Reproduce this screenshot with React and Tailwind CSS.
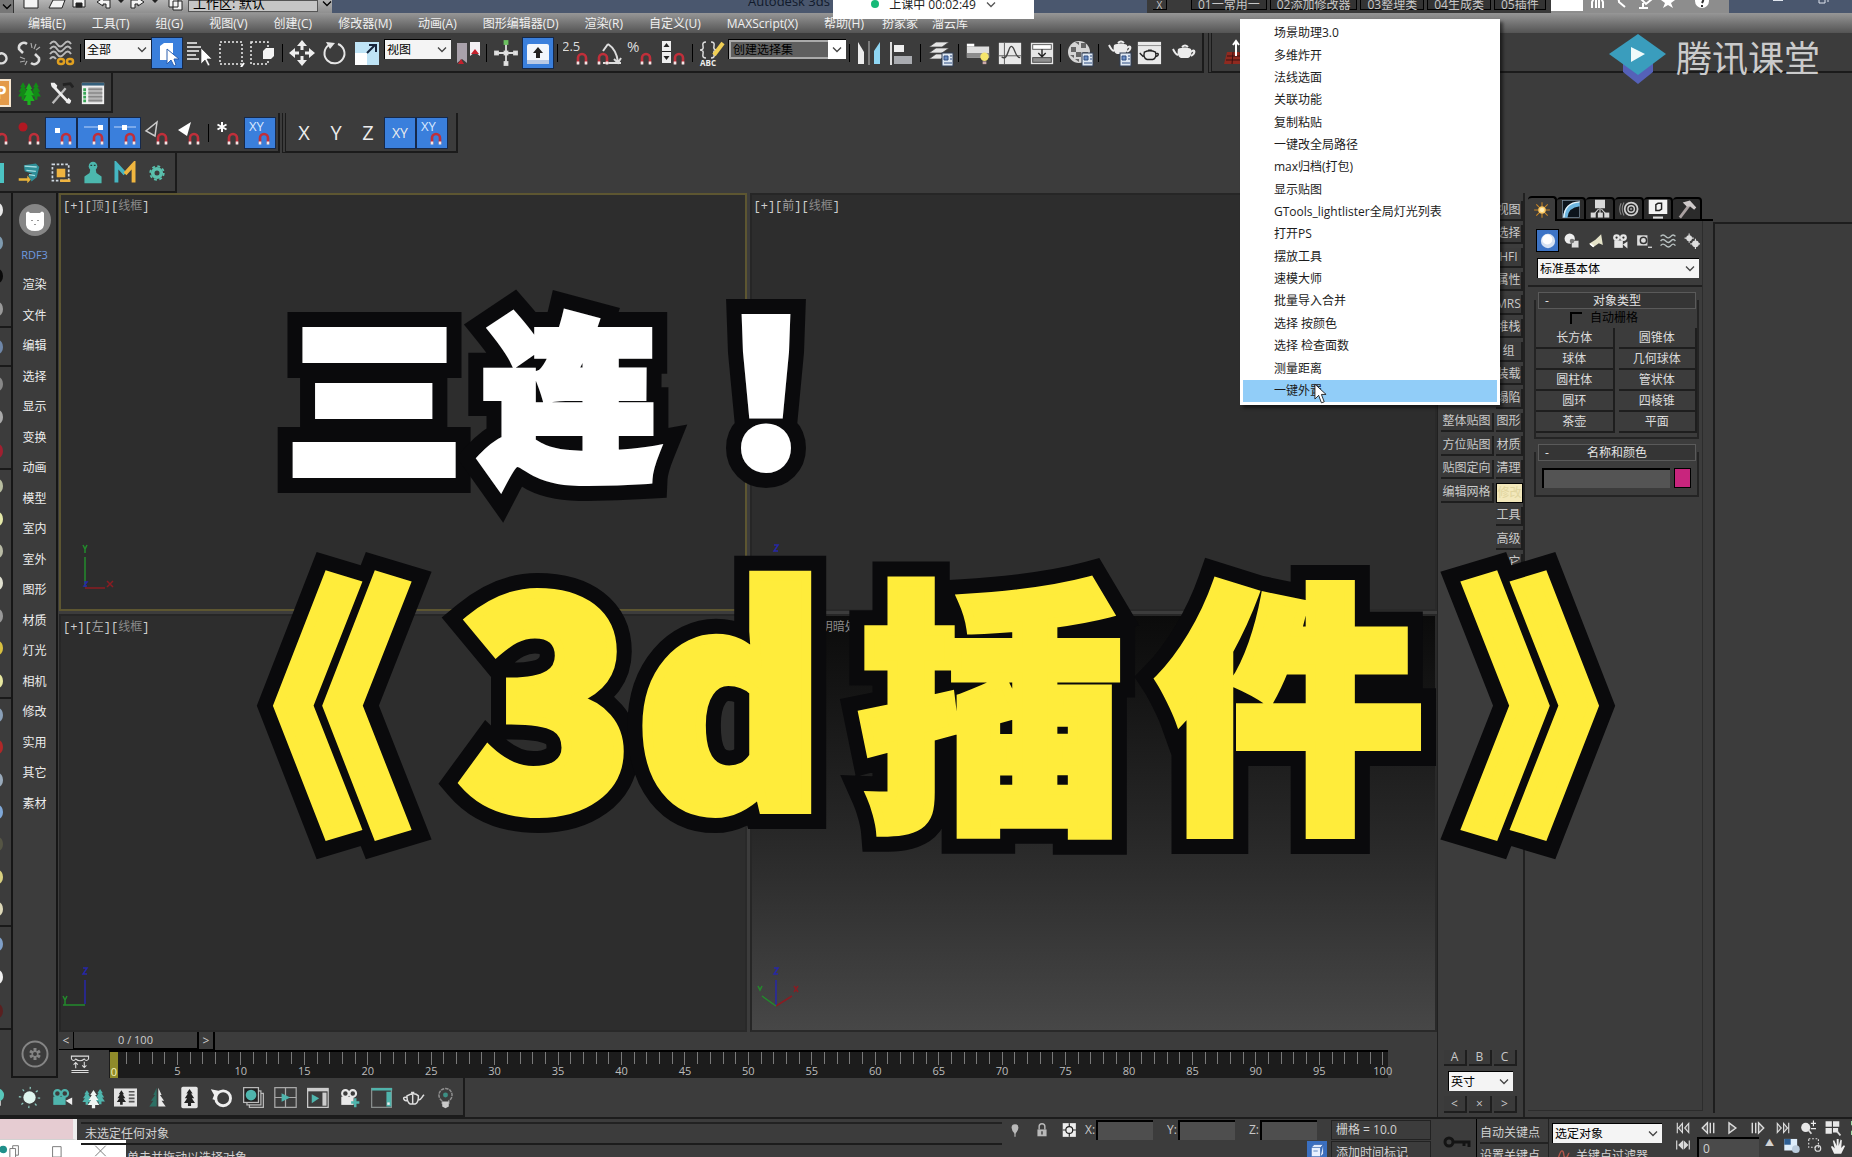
import React from "react";

const M = ({ x = 0 }) => (
  <g transform={`translate(${x} 0)`} fill="none">
    <path d="M15 25v-6a4 4 0 0 1 8 0v6" stroke="#c02f3a" strokeWidth="2.6" />
    <path d="M15 22.500v3M23 22.500v3" stroke="#f2e6e6" strokeWidth="2.6" />
  </g>
);
const page = <g><rect x="16" y="14" width="11" height="13" fill="#dfe8f2" stroke="#2f3d55" /><path d="M18 17h4v4h-4zM24 17h2M24 20h2M18 24h8" stroke="#2f4d80" fill="#6c8fc4" /></g>;
const teapot = <g><path d="M8 14c-1 4 0 8 3 9h7c3-1 4-5 3-9-4-2-9-2-13 0z" fill="#ececec" /><path d="M8 20c-3-1-4-4-5-6M21 17c4-4 5 1 0 4M12 12q3-3 6 0" fill="none" stroke="#ececec" strokeWidth="2" /></g>;
const tree = "M0-11l4 6h-2l4 6h-3l4 6h-5v4h-4v-4h-5l4-6h-3l4-6h-2z";
const film = (c) => <g><circle cx="9" cy="9" r="4" fill="none" stroke={c} strokeWidth="2.500" /><circle cx="18" cy="9" r="4" fill="none" stroke={c} strokeWidth="2.500" /><rect x="4" y="13" width="15" height="10" fill={c} /></g>;

const ICONS = {
  link: <path d="M8 19a5 5 0 1 1 4-8l4 4a5 5 0 1 1-1 8l-5-5" fill="none" stroke="#ddd" strokeWidth="2.500" />,
  unlink: <g fill="none" stroke="#ddd" strokeWidth="2.500"><path d="M12 5a5 5 0 0 0-8 5l4 4M16 24a5 5 0 0 0 8-5l-4-4" /><path d="M16 4l1 5M21 5l-2 5M25 8l-4 3M5 18l5 2M5 23l5-1M10 26l2-4" strokeWidth="1.200" stroke="#aaa" /></g>,
  bind: <g fill="none"><path d="M3 5q4-5 7 0t7 0 7 0M3 10q4-5 7 0t7 0 7 0M3 15q4-5 7 0t7 0 7 0M3 20q3-4 6 0" stroke="#b9b9b9" strokeWidth="2" /><rect x="11" y="20" width="6" height="5" rx="2.500" stroke="#e0a020" strokeWidth="2.500" /><rect x="20" y="20" width="6" height="5" rx="2.500" stroke="#e0a020" strokeWidth="2.500" /></g>,
  obj: <g><path d="M7 7l4-3h9v13l-4 4H7z" fill="#fff" /><path d="M14 10v15l4-4 3 6 2-1-2-6h5z" fill="#fff" stroke="#2b5fb0" /></g>,
  byname: <g><path d="M2 4h10M2 8h14M2 12h12M2 16h9M2 20h12" stroke="#c8c8c8" strokeWidth="2" /><path d="M16 9v16l4-4 3 6 2-1-3-6h5z" fill="#fff" stroke="#333" strokeWidth=".6" /></g>,
  rect: <g><rect x="3" y="3" width="22" height="22" fill="none" stroke="#eee" strokeWidth="1.500" strokeDasharray="2 2" /><path d="M27 24l-3 4" stroke="#fff" strokeWidth="2" /></g>,
  window: <g><rect x="2" y="3" width="17" height="22" fill="none" stroke="#eee" strokeWidth="1.500" strokeDasharray="2 2" /><path d="M14 12l3-3h8v8l-3 3h-8z" fill="#f4f4f4" /></g>,
  move: <g fill="#eee"><path d="M14 1l5 6H9zM14 27l5-6H9zM1 14l6-5v10zM27 14l-6-5v10z" /><path d="M14 7v4M14 17v4M7 14h4M17 14h4" stroke="#eee" strokeWidth="3" /></g>,
  rotate: <g><path d="M9 6a10 10 0 1 0 9-1" fill="none" stroke="#e6e6e6" strokeWidth="2" /><path d="M6 3l9 1-5 6z" fill="#e6e6e6" /></g>,
  scale: <g><rect x="2" y="3" width="24" height="23" fill="#bfe4f6" /><rect x="2" y="14" width="12" height="12" fill="#fff" /><path d="M14 14l8-8M16 6h7v7" stroke="#16253c" strokeWidth="2" fill="none" /></g>,
  pivot: <g><path d="M4 4h10v20l-5-4-5 4z" fill="#a9a1ab" /><path d="M17 3h10v14l-5-4-5 4z" fill="#f3eff3" /><path d="M8 20l3 5h-6zM22 10l4 5h-8z" fill="#c4202c" /></g>,
  manip: <g stroke="#ddd" strokeWidth="1.800" fill="#eee"><path d="M14 4v20M4 14h20" /><rect x="12.500" y="12.500" width="3" height="3" /><rect x="3" y="12.500" width="3" height="3" /><rect x="22" y="12.500" width="3" height="3" /><rect x="12.500" y="23" width="3" height="3" /><rect x="12.500" y="2" width="3" height="3" fill="#6cc060" stroke="#6cc060" /></g>,
  key: <g><rect x="3" y="5" width="22" height="18" rx="2" fill="#f2f6fc" /><path d="M3 21h22v4H3z" fill="#b9c9e4" /><path d="M14 8l5 6h-3v5h-4v-5H9z" fill="#222" /></g>,
  snap25: <g><text x="-1" y="12" fontSize="13" fill="#ddd">2.5</text><M /></g>,
  angle: <g><path d="M8 24h18M13 5L8 12M13 5c6 4 9 10 10 18M19 20l4 4 3-5" fill="none" stroke="#ddd" strokeWidth="2" /><M x={-11} /></g>,
  percent: <g><text x="0" y="13" fontSize="15" fill="#ddd">%</text><M /></g>,
  spin: <g><rect x="3" y="2" width="9" height="22" fill="#eee" /><path d="M7.500 4l3 4h-6zM7.500 21l3-4h-6z" fill="#222" /><path d="M3 12.500h9" stroke="#222" /><M x={1} /></g>,
  braces: <g><path d="M8 3q-4 0-3 4t-3 4q4 0 3 4t3 4M13 3q4 0 3 4t3 4q-4 0-3 4t-3 4" fill="none" stroke="#ddd" strokeWidth="1.500" /><path d="M25 4l-9 12" stroke="#f0cf55" strokeWidth="4" /><text x="2" y="27" fontSize="8" fontWeight="700" fill="#eee">ABC</text></g>,
  mirror: <g><path d="M3 3v22h6V13z" fill="#ececec" /><path d="M14 2v24" stroke="#bbb" /><path d="M25 3v22h-6V12z" fill="#8fd6f3" /></g>,
  align: <g><path d="M4 3v23" stroke="#ddd" strokeWidth="2" /><rect x="7" y="6" width="10" height="7" fill="#eee" /><rect x="7" y="17" width="18" height="8" fill="#a9abb0" /></g>,
  layers: <g><path d="M10 3h13l-7 5H3zM10 9h13l-7 5H3zM10 15h10l-5 5H3z" fill="#e6e6e6" stroke="#444" strokeWidth=".7" />{page}</g>,
  ribbon: <g><path d="M2 7h24v12H2z" fill="#dedede" /><path d="M2 4h8v3H2z" fill="#fff" /><path d="M2 14h24v5H2z" fill="#8c8c8c" /><circle cx="21" cy="18" r="4.500" fill="#f5e66c" /><path d="M19 23h4v3h-4z" fill="#caa" /></g>,
  curve: <g><rect x="2" y="3" width="24" height="23" fill="#e8e8e8" /><path d="M8 3v23M2 17h24" stroke="#555" /><path d="M5 18c7 6 7-13 11-11s3 12 9 12" fill="none" stroke="#444" strokeWidth="1.500" /></g>,
  schematic: <g><rect x="2" y="3" width="24" height="23" fill="#e6e6e6" /><rect x="4" y="5" width="20" height="5" fill="#fff" stroke="#555" /><rect x="4" y="19" width="20" height="5" fill="#8f8f8f" stroke="#444" /><path d="M14 10v7M10 14l4 4 4-4" stroke="#222" strokeWidth="1.500" fill="none" /></g>,
  material: <g><circle cx="13" cy="13" r="11" fill="#d5d5d5" /><path d="M5 8h5v5H5zM15 4h5v5h-5zM10 13h5v5h-5zM4 16h4v3M16 13h6v4M9 3h4v3M9 20h4v3" fill="#666" />{page}</g>,
  rsetup: <g><g transform="translate(2 -8)">{teapot}</g>{page}</g>,
  rframe: <g><rect x="2" y="2" width="25" height="24" fill="#e9e9e9" /><path d="M2 6h25" stroke="#888" /><path d="M9 13c-1 4 0 7 3 8h6c3-1 4-4 3-8-4-2-8-2-12 0zM8 18l-4-4M21 15c4-2 4 2 0 3M13 11h4" fill="none" stroke="#222" strokeWidth="1.500" /></g>,
  render: <g transform="translate(1 -4)">{teapot}</g>,
  redgrid: <g><path d="M5 14h20l3 12H2z" fill="#8f2a20" /><path d="M5 18h21M4 22h23M11 14l-1 12M18 14l1 12" stroke="#3a1010" /><path d="M14 18V4M11 7l3-4 3 4" stroke="#fff" strokeWidth="2" fill="none" /></g>,
  orange: <g><rect x="1" y="1" width="26" height="26" fill="#e39a49" stroke="#f6e6d0" strokeWidth="2" /><text x="13" y="20" fontSize="17" fontWeight="700" fill="#fff">P</text></g>,
  trees: <g fill="#128a16"><path d={tree} transform="translate(8 12) scale(.7 .8)" /><path d={tree} transform="translate(21 12) scale(.7 .8)" /><path d={tree} transform="translate(14 15) scale(.8 1)" fill="#1cb41f" /></g>,
  wrench: <g><path d="M5 25L19 9" stroke="#bbb" strokeWidth="2.500" /><path d="M6 7l15 16" stroke="#eee" strokeWidth="3" /><path d="M3 3q0 7 6 6l1-3-3-3zM19 24q5 4 6-2l-3-3z" fill="#eee" /><path d="M16 5l8-1 3 4" stroke="#222" strokeWidth="3" fill="none" /></g>,
  list: <g><rect x="2" y="3" width="24" height="23" fill="#f1f1f1" /><path d="M2 3h24v3H2z" fill="#35607c" /><path d="M5 9v15" stroke="#3aa657" strokeWidth="3" strokeDasharray="3 1" /><path d="M9 8h15v16H9z" fill="#b5b5b5" /><path d="M9 10h15M9 14h15M9 18h15M9 22h15" stroke="#888" strokeWidth="1.500" /></g>,
  magnet: <M />,
  redmag: <g><circle cx="8" cy="8" r="4.500" fill="#b01822" /><M /></g>,
  dotmag: <g><rect x="8" y="9" width="5" height="5" fill="#fff" /><M /></g>,
  edgemag: <g><path d="M5 8h18" stroke="#bcd6fa" /><rect x="19" y="6" width="5" height="5" fill="#fff" /><M /></g>,
  midmag: <g><path d="M3 8h22" stroke="#bcd6fa" /><rect x="11" y="6" width="5" height="5" fill="#fff" /><M /></g>,
  trimag: <g><path d="M14 3L3 12l9 5z" fill="none" stroke="#ccc" strokeWidth="1.500" /><M /></g>,
  trifmag: <g><path d="M16 3L3 11l9 6z" fill="#fff" /><M /></g>,
  starmag: <g><path d="M8 3v10M3.500 5.500l9 5M12.500 5.500l-9 5" stroke="#fff" strokeWidth="2" /><M /></g>,
  xymag: <g><text x="3" y="12" fontSize="13" fill="#dbe9ff">XY</text><M x={-1} /></g>,
  teal: <path d="M6 4h4v20H6zM12 4h9v20h-4V9h-5z" fill="#4cc3c3" />,
  books: <g><path d="M8 5l14-2 4 4-3 12-6 5-4-7 5-2-9-3z" fill="#2f8f98" /><path d="M9 6l14 1M11 11l11 1M14 16l7 1" stroke="#a5dde0" strokeWidth="1.500" /><path d="M2 20h10v-3l4 5-4 4v-3H2z" fill="#eab43a" /></g>,
  region: <g><rect x="4" y="4" width="19" height="19" fill="none" stroke="#cfd8e0" strokeWidth="2" strokeDasharray="3 2" /><rect x="9" y="9" width="10" height="10" fill="#efb440" /><path d="M13 23h12" stroke="#efb440" strokeWidth="3" /></g>,
  bust: <g fill="#4cb8ae"><circle cx="14" cy="6" r="5" /><path d="M11 9h6l1 5 6 4v8H4v-8l6-4z" /><path d="M11 5h2M15 5h2" stroke="#1f3f3c" strokeWidth="1.500" /></g>,
  mm: <g><path d="M4 25V4l10 11" fill="none" stroke="#45b6c2" strokeWidth="4.500" /><path d="M14 15L24 4v21" fill="none" stroke="#f0b63f" strokeWidth="4.500" /></g>,
  gear: <g><circle cx="14" cy="14" r="6" fill="none" stroke="#5ac0ad" strokeWidth="5" /><circle cx="14" cy="14" r="9.500" fill="none" stroke="#5ac0ad" strokeWidth="2.500" strokeDasharray="4 3.500" /></g>,
  bulbT: <g><circle cx="14" cy="11" r="8" fill="#58c7bb" /><path d="M10 18h8v6h-8z" fill="#ddd" /></g>,
  sun: <g><circle cx="14" cy="14" r="7.500" fill="#dff5ee" /><circle cx="14" cy="14" r="11.500" fill="none" stroke="#8cc9be" strokeWidth="3" strokeDasharray="1.500 7.500" /></g>,
  camT: <g>{film("#4fb5ad")}<path d="M19 18l8-4v9z" fill="#eee" /></g>,
  treesT: <g><path d={tree} transform="translate(6 14) scale(.8)" fill="#4fb5ad" /><path d={tree} transform="translate(22 13) scale(.85)" fill="#4fb5ad" /><path d={tree} transform="translate(14 16)" fill="#eef5f3" /></g>,
  treelist: <g><rect x="0" y="3" width="28" height="22" fill="#e2e2e2" /><path d={tree} transform="translate(9 14) scale(.8)" fill="#222" /><path d="M18 7h7M18 11h7M18 15h7M18 19h7" stroke="#555" strokeWidth="2" /></g>,
  halftree: <g><path d="M13 2v23H4l5-7H6l5-7H9z" fill="#2d6f64" /><path d="M15 2v23h9l-5-7h3l-5-7h2z" fill="#e8e8e8" /></g>,
  treebox: <g><rect x="4" y="1" width="20" height="26" rx="2" fill="#e6e6e6" /><path d={tree} transform="translate(14 14) scale(.95)" fill="#222" /></g>,
  ring: <g><circle cx="16" cy="15" r="9" fill="none" stroke="#eee" strokeWidth="3.500" /><path d="M1 4l11 2-6 11-3-1 2-5z" fill="#eee" /></g>,
  stack: <g fill="none" stroke="#bbb" strokeWidth="1.500"><rect x="9" y="9" width="17" height="17" /><rect x="6" y="6" width="17" height="17" fill="#333" /><rect x="2" y="2" width="18" height="18" fill="#222" /><circle cx="11" cy="11" r="6.500" fill="#4fb5ad" stroke="none" /></g>,
  quad: <g fill="none" stroke="#aaa" strokeWidth="1.500"><rect x="1" y="2" width="26" height="24" /><path d="M14 2v24M1 14h26" /><path d="M10 10l8 4-8 4z" fill="#4fb5ad" stroke="#4fb5ad" /></g>,
  play: <g><rect x="2" y="3" width="25" height="23" fill="none" stroke="#ccc" strokeWidth="1.500" /><path d="M2 5h25" stroke="#ccc" strokeWidth="3" /><path d="M7 10l9 5-9 6z" fill="#4fb5ad" /><path d="M20 8h5v16h-5z" fill="#ccc" /></g>,
  camplus: <g>{film("#e8e8e8")}<path d="M21 15v11M16 20h10" stroke="#4fb5ad" strokeWidth="3" /></g>,
  panelT: <g><rect x="2" y="3" width="24" height="23" fill="none" stroke="#8a8f8e" strokeWidth="1.500" /><path d="M2 4h25" stroke="#4fb5ad" strokeWidth="3" /><path d="M20 7h6v18h-6z" fill="#4fb5ad" /><path d="M21 20h3v3h-3z" fill="#eee" /></g>,
  pot: <g><path d="M6 12q9-5 14 0 0 9-4 10H10Q6 20 6 12zM6 14c-6-2-5 4 1 4M20 17c5-1 4-5 7-6M11 8h4M13 10v12" fill="none" stroke="#ddd" strokeWidth="1.800" /></g>,
  bulb: <g><path d="M10 18a8 8 0 1 1 8 0v3h-8z" fill="none" stroke="#8f8f8f" strokeWidth="1.800" strokeDasharray="4 1" /><circle cx="14" cy="11" r="3" fill="#3d8f84" /><path d="M10 19h8v6l-4 2-4-2z" fill="#c9c9c9" /></g>,
  keys: <g fill="none" stroke="#ddd" strokeWidth="1.500"><path d="M2 3h24v4q-3 4-6 0-6 5-12 0-3 4-6 0zM8 20v-8M5 15l3-3 3 3M20 11v8M17 16l3 3 3-3M2 23h24M2 26h24" /></g>,
  create: <g><circle cx="14" cy="14" r="5" fill="#ffd97a" /><path d="M14 3v22M3 14h22M6 6l16 16M22 6L6 22" stroke="#c98524" strokeWidth="1.500" /><circle cx="14" cy="14" r="5" fill="#ffce6a" /><circle cx="14" cy="14" r="3" fill="#ffeeb8" /></g>,
  modify: <g><rect x="2" y="2" width="24" height="24" fill="#0c141c" stroke="#7d8f9f" /><path d="M6 26Q7 9 26 7" fill="none" stroke="#6db6e0" strokeWidth="6" /><path d="M4 26Q5 5 26 4" fill="none" stroke="#e6f5fc" strokeWidth="2" /></g>,
  hier: <g fill="#d8d8d8"><rect x="7" y="1" width="14" height="12" /><path d="M14 13v9M12 14l-7 8M16 14l7 8" stroke="#d8d8d8" strokeWidth="1.500" /><rect x="1" y="19" width="7" height="7" /><rect x="11" y="19" width="7" height="7" /><rect x="20" y="19" width="7" height="7" /></g>,
  motion: <g fill="none" stroke="#cfcfcf"><circle cx="17" cy="14" r="9" strokeWidth="2.500" /><circle cx="17" cy="14" r="4.500" strokeWidth="2" /><circle cx="17" cy="14" r="1" /><path d="M7 5q-5 9 0 18M3 6q-4 8 0 16" stroke="#888" strokeWidth="1.500" /></g>,
  display: <g><rect x="1" y="1" width="26" height="20" fill="#f2f2f2" /><path d="M7 26h14" stroke="#ddd" strokeWidth="3" /><path d="M11 8l3-2h5v8l-3 2h-5z" fill="none" stroke="#222" strokeWidth="2" /></g>,
  hammer: <g><path d="M4 26L17 9" stroke="#a9a0a0" strokeWidth="4" /><path d="M8 5l10-3 9 10-3 3-6-5-4 1z" fill="#cfcaca" /></g>,
  sphere: <g><circle cx="14" cy="14" r="10" fill="#d7e2f2" /><circle cx="13" cy="12" r="7" fill="#fff" /></g>,
  shapes: <g><circle cx="10" cy="10" r="9" fill="#eee" /><path d="M13 13h13v13H13z" fill="#ddd" stroke="#333" /><circle cx="14" cy="14" r="4" fill="#777" /></g>,
  light: <g><path d="M23 2l3 19-7-3-10 7-7-6 11-7z" fill="#e5e3c9" /><path d="M4 19l6 5" stroke="#fff" strokeWidth="3" /></g>,
  camera: <g fill="#e6e6e6"><circle cx="8" cy="8" r="6" /><circle cx="20" cy="8" r="6" /><rect x="4" y="13" width="15" height="13" /><path d="M19 20l8-5v12z" /><circle cx="8" cy="8" r="2" fill="#333" /><circle cx="20" cy="8" r="2" fill="#333" /></g>,
  helper: <g><rect x="2" y="4" width="18" height="18" fill="#ddd" /><circle cx="13" cy="13" r="5.500" fill="none" stroke="#333" strokeWidth="2.500" /><path d="M21 25h7" stroke="#ccc" strokeWidth="2.500" /></g>,
  waves: <path d="M1 6q4-5 9 0t9 0 8 0M1 14q4-5 9 0t9 0 8 0M1 22q4-5 9 0t9 0 8 0" fill="none" stroke="#b9c2c2" strokeWidth="2.500" />,
  gears: <g fill="#ddd"><circle cx="9" cy="9" r="5" /><circle cx="20" cy="19" r="6" /><path d="M9 1v16M1 9h16M20 10v18M11 19h17" stroke="#ddd" strokeWidth="2" /></g>,
  pin: <g><path d="M14 4a6 6 0 0 1 6 6q0 5-6 11-6-6-6-11a6 6 0 0 1 6-6z" fill="#b9b9b9" /><path d="M14 19v7" stroke="#b9b9b9" strokeWidth="2" /></g>,
  lock: <g><rect x="6" y="13" width="16" height="12" fill="#b9b9b9" /><path d="M9 13V8a5 5 0 0 1 10 0v5" fill="none" stroke="#b9b9b9" strokeWidth="2.500" /><path d="M14 16v6" stroke="#222" strokeWidth="2" /></g>,
  abs: <g><rect x="3" y="2" width="23" height="24" fill="#eee" /><circle cx="14.500" cy="14" r="6" fill="none" stroke="#222" strokeWidth="2" /><path d="M14.500 2v6M14.500 20v6M3 14h6M20 14h6" stroke="#222" strokeWidth="2" /></g>,
  bigkey: <g fill="none" stroke="#141414" strokeWidth="3"><circle cx="6" cy="14" r="4" /><path d="M10 14h16v5M21 14v4" /></g>,
  first: <path d="M4 5v18M13 6l-7 8 7 8zM24 6l-7 8 7 8z" fill="#555" stroke="#ddd" strokeWidth="2" />,
  last: <path d="M24 5v18M15 6l7 8-7 8zM4 6l7 8-7 8z" fill="#555" stroke="#ddd" strokeWidth="2" />,
  prev: <path d="M13 5l-9 9 9 9zM18 5v18M24 5v18" fill="#555" stroke="#ddd" strokeWidth="2.500" />,
  next: <path d="M15 5l9 9-9 9zM4 5v18M10 5v18" fill="#555" stroke="#ddd" strokeWidth="2.500" />,
  playb: <path d="M7 5l12 9-12 9z" fill="#555" stroke="#ddd" strokeWidth="2.500" />,
  keymode: <path d="M3 6v16M13 8l-6 6 6 6zM16 8l6 6-6 6zM25 6v16" fill="#ddd" stroke="#ddd" strokeWidth="2" />,
  zoom: <g><circle cx="10" cy="13" r="8" fill="#e8e8e8" /><path d="M15 18l5 6" stroke="#ddd" strokeWidth="3" /><path d="M19 6h9M23.500 1v10M19 15h9" stroke="#eee" strokeWidth="2" /></g>,
  zoomall: <g fill="#e8e8e8"><path d="M1 2h11v10H1zM14 2h11v10H14zM1 14h11v10H1zM14 14h9v8h-9z" /><path d="M21 20l6 7" stroke="#ddd" strokeWidth="3" /></g>,
  extents: <g fill="none" stroke="#9fd8a4" strokeWidth="2.500"><path d="M9 3H3v6M3 19v6h6M19 3h6v6M25 19v6h-6" /><rect x="9" y="9" width="10" height="10" fill="#eee" stroke="none" /></g>,
  fov: <g><rect x="2" y="3" width="20" height="18" fill="#dfeefb" /><path d="M2 3h10v9H2z" fill="#2e5f94" /><circle cx="20" cy="19" r="6" fill="#bcd" /></g>,
  zregion: <g fill="none" stroke="#ddd" strokeWidth="2"><rect x="3" y="3" width="17" height="15" strokeDasharray="3 3" /><circle cx="19" cy="20" r="5" /></g>,
  hand: <path d="M8 26L3 15l2-1 4 4L6 6l2-1 4 9V3h3v11l3-10 2 1-1 12 4-4 2 1-6 12z" fill="#eee" />,
  curveR: <path d="M2 25C8 25 9 5 14 5s1 12 6 12 4-8 7-8" fill="none" stroke="#b5564a" strokeWidth="2.500" />,
  cube: <g><path d="M6 9h13v13H6zM6 9l4-4h13l-4 4M23 5v13l-4 4" fill="#e8f1ff" stroke="#2f5da8" /><path d="M9 14h6" stroke="#2f5da8" /></g>,
};

const Ico = ({ n, className = "size-7" }) => (
  <svg viewBox="0 0 28 28" className={`${className} shrink-0`} aria-hidden="true">{ICONS[n]}</svg>
);
const Btn = ({ n, on, children, className = "w-8", ico }) => (
  <button type="button" aria-label={n} className={`flex h-8 shrink-0 items-center justify-center ${className}`}>
    <span className={`flex h-[30px] w-[30px] items-center justify-center ${on ? "bg-[#3a7fdc] ring-1 ring-[#16294a]" : ""}`}>
      {children || <Ico n={n} className={ico} />}
    </span>
  </button>
);
const Sep = () => <span className="mx-[3px] h-[18px] w-px shrink-0 bg-black" />;
const Chevron = ({ className = "text-[#444]" }) => (
  <svg viewBox="0 0 10 6" className={`h-[6px] w-[10px] ${className}`} aria-hidden="true"><path d="M1 .5l4 4 4-4" fill="none" stroke="currentColor" strokeWidth="1.300" /></svg>
);
const Sel = ({ label, value, className, field = "bg-[#f4f4f4] text-black", box = "" }) => (
  <span className={`relative flex h-5 shrink-0 items-center border-t border-l border-black ${className}`}>
    <select aria-label={label} className={`h-full w-full appearance-none pl-0.5 text-xs leading-none outline-none ${field}`}>
      <option>{value}</option>
    </select>
    <span className={`pointer-events-none absolute inset-y-0 right-0 flex w-[18px] items-center justify-center ${box}`}><Chevron /></span>
  </span>
);

const MENUS = ["编辑(E)", "工具(T)", "组(G)", "视图(V)", "创建(C)", "修改器(M)", "动画(A)", "图形编辑器(D)", "渲染(R)", "自定义(U)", "MAXScript(X)", "帮助(H)"];
const POPUP = ["场景助理3.0", "多维炸开", "法线选面", "关联功能", "复制粘贴", "一键改全局路径", "max归档(打包)", "显示贴图", "GTools_lightlister全局灯光列表", "打开PS", "摆放工具", "速模大师", "批量导入合并", "选择 按颜色", "选择 检查面数", "测量距离", "一键外置"];
const SIDE = ["渲染", "文件", "编辑", "选择", "显示", "变换", "动画", "模型", "室内", "室外", "图形", "材质", "灯光", "相机", "修改", "实用", "其它", "素材"];
const NARROW = ["视图", "选择", "HFI", "属性", "MRS", "堆栈", "组", "装载", "塌陷", "图形", "材质", "清理", "修改", "工具", "高级", "其它"];
const WIDE = [["整体贴图", "row-start-10"], ["方位贴图", "row-start-11"], ["贴图定向", "row-start-12"], ["编辑网格", "row-start-13"]];
const TABS = ["01一常用一", "02添加修改器", "03整理类", "04生成类", "05插件"];
const SLIVERS = [
  ["h-[135px]", ["#e8e8e8", "#7f9bb0", "#0a0a0a", "#999"]],
  ["h-[39px]", ["#6e86a8"]],
  ["h-[103px]", ["#888", "#aaa", "#a02030"]],
  ["h-[229px]", ["#b8bda0", "#e4e8a8", "#b9bba5", "#e0e0d0", "#999", "#d8c040", "#e8e8a0"]],
  ["h-[228px]", ["#8aa0b8", "#b02828", "#9ab", "#7fa8d8", "#554", "#d8d080", "#ddd8b8"]],
  ["h-[103px]", ["#7f9fc8", "#eee", "#5a2020"]],
];
const SHAPES = ["长方体", "圆锥体", "球体", "几何球体", "圆柱体", "管状体", "圆环", "四棱锥", "茶壶", "平面"];

function TitleBar() {
  return (
    <header className="flex h-[13px] shrink-0 overflow-hidden bg-[#4a576e] text-xs">
      <div className="flex w-[332px] shrink-0 items-start bg-gradient-to-b from-[#b4b4b4] to-[#8f8f8f]">
        <button type="button" aria-label="应用菜单" className="flex h-full w-[14px] items-center justify-center border-r border-[#333] bg-[#777]"><Chevron className="text-black" /></button>
        <svg viewBox="0 0 174 13" className="h-[13px] w-[174px]" fill="#f4f4f4" stroke="#222" aria-hidden="true">
          <path d="M10-2h14v10H10zM35 8l4-8h12l-3 8zM59-2h12v9H59z" /><path d="M62 3h6v4h-6z" fill="#222" />
          <path d="M83 2l6-4v2h7v8h-4V4h-3v2zM130 2l-6-4v2h-7v8h4V4h3v2zM155-2h9v9h-9zM159 1h9v9h-9z" /><path d="M104 0h6l-3 3zM138 0h6l-3 3z" fill="#222" stroke="none" />
        </svg>
        <span className="h-3 w-[130px] border border-[#555] bg-[#c6c6c6] pl-1 text-[13px] leading-[4px] text-black">工作区: 默认</span>
        <span className="ml-1 flex h-2 items-center"><Chevron className="text-black" /></span>
      </div>
      <span className="ml-[416px] shrink-0 text-[13px] leading-[2px] text-[#111a2b]">Autodesk 3ds Max</span>
      <div className="ml-auto flex w-[404px] shrink-0 items-start bg-[#3a3a3a] text-[#c8c8c8]">
        <button type="button" className="ml-[6px] h-[10px] w-[14px] border-r border-b border-black text-[10px] leading-[8px]">X</button>
        <nav className="ml-6 flex gap-[3px]">
          {TABS.map((t) => (
            <button key={t} type="button" className="h-[10px] border-x border-b border-black bg-[#333] px-1.5 text-xs leading-[2px] whitespace-nowrap">{t}</button>
          ))}
        </nav>
      </div>
      <div className="flex w-[178px] shrink-0 bg-[#8d8d8d]">
        <input aria-label="搜索" className="h-[11px] w-8 bg-white" />
        <svg viewBox="0 0 146 13" className="h-[13px] w-[146px]" fill="none" stroke="#fff" strokeWidth="2" aria-hidden="true">
          <path d="M9 8V2l2-4M13 8V0M16 8V0M20 8V2l-2-4M30-2q6-1 6 4l6 5M56 8h9M60 8V3M57-2l6 6 6-5" /><path d="M85-4l2 4h5l-4 3 2 5-5-3-5 3 2-5-4-3h5z" fill="#fff" stroke="none" /><circle cx="119" cy="1" r="7" fill="#fff" stroke="none" /><path d="M117-1q4-1 3 2l-1 2M119 5v2" stroke="#333" />
        </svg>
      </div>
      <svg viewBox="0 0 123 13" className="h-[13px] w-[123px] shrink-0" fill="none" stroke="#dfe5ee" aria-hidden="true"><path d="M44 .5h10M90-2v5h6v-5M92-2h7v4" /></svg>
    </header>
  );
}

function Viewport({ label, name, mode, active, children, className = "bg-[#2d2d2d]" }) {
  return (
    <section aria-label={label} className={`flex min-h-0 min-w-0 flex-col justify-between border-2 ${active ? "border-[#5d5631]" : "border-t-[#262626] border-r-[#292929] border-b-[#292929] border-l-[#262626]"} ${className}`}>
      <p className="px-0.5 pt-1 font-['Liberation_Mono','Noto_Sans_CJK_SC',monospace] text-xs leading-4 text-[#d0d0d0]">[+][<span className="text-[#a0a0a0]">{name}</span>][<span className="text-[#8a8a8a]">{mode}</span>]</p>
      <svg viewBox="0 0 64 60" className="mb-3.5 h-[60px] w-16 overflow-visible" fill="none" strokeWidth="1.500" aria-hidden="true">{children}</svg>
    </section>
  );
}

function Ruler() {
  return (
    <div className="flex h-7 items-stretch">
      <button type="button" aria-label="迷你曲线编辑器" className="flex w-[51px] shrink-0 items-center pl-[12px]"><Ico n="keys" className="size-[20px]" /></button>
      <div className="mr-[49px] flex flex-1 justify-between border-t-2 border-black bg-[#1c1c1c] px-[5px] text-[11px] leading-3 text-[#bdbdbd]">
        {Array.from({ length: 101 }, (_, i) => (
          <span key={i} className="flex w-0 flex-col items-center">
            {i === 0 ? (
              <span className="flex h-[26px] w-2 shrink-0 items-end justify-center bg-[#8f8b2a] text-[#f6f3b8]">0</span>
            ) : (
              <span className={`w-px shrink-0 bg-[#7a7a7a] ${i % 5 ? "h-3" : "h-[13px]"}`} />
            )}
            {i > 0 && i % 5 === 0 && <span>{i}</span>}
          </span>
        ))}
      </div>
    </div>
  );
}

const cmdBtn = "border-r-2 border-b-2 border-[#1e1e1e] text-xs leading-none text-[#dcdcdc]";

function Rollout({ title, children }) {
  return (
    <section className="mr-[3px] ml-1.5 flex flex-col border-x-2 border-b-2 border-[#242424]">
      <button type="button" className="-mt-2 mr-px ml-0.5 flex h-[17px] items-center border border-[#5a5a5a] bg-[#353535] text-xs text-[#e4e4e4]">
        <span className="w-4">-</span><span className="flex-1 pr-4 text-center">{title}</span>
      </button>
      {children}
    </section>
  );
}

function CommandPanel() {
  return (
    <aside className="flex w-[188px] shrink-0 flex-col pl-[3px]">
      <div className="mt-[3px] flex h-[25px] shrink-0 items-end">
        {["create", "modify", "hier", "motion", "display", "hammer"].map((n, i) => (
          <button key={n} type="button" aria-label={n} className={`flex w-[29px] items-center justify-center rounded-t border-t-2 border-r-2 border-black ${i ? "h-6 border-b-2 bg-[#2b2b2b]" : "h-[25px]"}`}><Ico n={n} className="size-5" /></button>
        ))}
        <span className="h-0.5 flex-1 bg-black" />
      </div>
      <div className="mr-[10px] flex flex-1 flex-col border-r border-b border-[#2c2c2c]">
        <div className="mt-[9px] flex gap-[3px] pl-[9px]">
          {["sphere", "shapes", "light", "camera", "helper", "waves", "gears"].map((n, i) => (
            <button key={n} type="button" aria-label={n} className={`flex size-[21px] items-center justify-center ${i ? "" : "bg-[#3d74c6] ring-1 ring-black"}`}><Ico n={n} className={i ? "size-4" : "size-5"} /></button>
          ))}
        </div>
        <Sel label="对象类别" value="标准基本体" className="mt-[7px] mr-[3px] ml-[9px]" />
        <hr className="mt-[7px] border-t-2 border-[#202020]" />
        <div className="mt-[13px]">
          <Rollout title="对象类型">
            <label className="flex h-[18px] items-center gap-2 pl-[34px] text-xs text-black">
              <input type="checkbox" disabled className="size-3 appearance-none border-t-2 border-l-2 border-black" />自动栅格
            </label>
            <div className="grid grid-cols-2 gap-x-1 pt-px pb-1">
              {SHAPES.map((s) => <button key={s} type="button" className={`h-[21px] ${cmdBtn}`}>{s}</button>)}
            </div>
          </Rollout>
        </div>
        <div className="mt-[13px]">
          <Rollout title="名称和颜色">
            <div className="mt-[7px] mb-[7px] flex gap-1 px-1.5">
              <input aria-label="名称" className="h-5 min-w-0 flex-1 border-t-2 border-l-2 border-black bg-[#545454]" />
              <button type="button" aria-label="颜色" className="h-5 w-[17px] border border-black bg-[#c8257d]" />
            </div>
          </Rollout>
        </div>
      </div>
      <div className="h-1.5" />
    </aside>
  );
}

const small = "flex items-center justify-center border-r-2 border-b-2 border-[#1e1e1e] bg-[#3a3a3a] text-xs leading-none whitespace-nowrap text-[#c9c9c9]";

function ToolColumn() {
  return (
    <aside className="flex w-[88px] shrink-0 flex-col border-r-2 border-l border-[#202020]">
      <div className="mt-2 flex h-[372px] gap-[2px] pl-[3px]">
        <div className="grid w-[53px] grid-rows-16 gap-y-1">
          {WIDE.map(([t, row]) => <button key={t} type="button" className={`${small} ${row}`}>{t}</button>)}
        </div>
        <div className="grid w-[26px] grid-rows-16 gap-y-1">
          {NARROW.map((t, i) => <button key={i} type="button" className={i === 12 ? "border border-black bg-[#f3e8bb] text-xs leading-none text-[#e0d49e]" : small}>{t}</button>)}
        </div>
      </div>
      <div className="mt-auto flex flex-col gap-[5px] px-1.5 pb-1">
        <div className="grid grid-cols-3 gap-0.5">{["A", "B", "C"].map((t) => <button key={t} type="button" className={`${small} h-4`}>{t}</button>)}</div>
        <Sel label="单位" value="英寸" className="mx-1" />
        <div className="grid grid-cols-3 gap-0.5">{["<", "×", ">"].map((t) => <button key={t} type="button" className={`${small} h-[17px]`}>{t}</button>)}</div>
      </div>
    </aside>
  );
}

const Coord = ({ axis }) => (
  <label className="flex items-center gap-px text-xs leading-5 text-[#c9c9c9]">
    {axis}:<input className="h-5 w-[57px] border-t-2 border-l-2 border-black bg-[#4e4e4e]" />
  </label>
);

function StatusBar() {
  return (
    <footer className="flex h-10 shrink-0 overflow-hidden border-t-2 border-[#1c1c1c] text-xs text-[#d2d2d2]">
      <div className="flex w-[126px] shrink-0 flex-col">
        <div className="mr-[49px] h-[22px] border-r-4 border-b border-r-[#eee] bg-[#e6ccd2]" />
        <svg viewBox="0 0 126 18" className="h-[18px] w-[126px] bg-white" fill="none" stroke="#777" aria-hidden="true"><circle cx="0" cy="10" r="4" fill="#1f8f8a" stroke="none" /><path d="M7 9h6v10H7zM10 9V6h6v10h-3M52 7h9v11h-9zM97 6l11 11M108 6L97 17" /></svg>
      </div>
      <div className="-ml-[45px] flex min-w-0 flex-1 flex-col">
        <div className="mt-[3px] h-[21px] border-t-2 border-[#222] pl-1 leading-5">未选定任何对象</div>
        <div className="h-5 border-t-2 border-[#1c1c1c] pt-1 pl-[46px] leading-[18px] whitespace-nowrap">单击并拖动以选择对象</div>
      </div>
      <div className="flex w-[435px] shrink-0 flex-col">
        <div className="flex h-[27px] items-center gap-[14px] pl-[5px]">
          <Ico n="pin" className="mr-[-3px] size-4" /><Ico n="lock" className="mr-[-3px] size-4" /><Ico n="abs" className="mr-[-6px] size-4" />
          <Coord axis="X" /><Coord axis="Y" /><Coord axis="Z" />
          <span className="h-5 w-[100px] border border-[#222] pl-1 leading-[18px]">栅格 = 10.0</span>
        </div>
        <div className="flex h-4 items-start">
          <span className="ml-[305px] flex h-4 w-5 justify-center bg-[#3a6fc0]"><Ico n="cube" className="size-5" /></span>
          <span className="ml-1 w-[100px] border border-[#222] pt-0.5 pl-1 leading-[18px]">添加时间标记</span>
        </div>
      </div>
      <div className="flex w-[415px] shrink-0">
        <button type="button" aria-label="设置关键点" className="flex w-10 shrink-0 items-center justify-center border-r border-black pt-2"><Ico n="bigkey" /></button>
        <div className="flex w-[72px] shrink-0 flex-col border-r border-[#222] pl-[3px] whitespace-nowrap">
          <button type="button" className="mt-1 h-[21px] border-b-2 border-[#222] text-left leading-5">自动关键点</button>
          <button type="button" className="h-5 text-left leading-6">设置关键点</button>
        </div>
        <div className="flex w-[113px] shrink-0 flex-col pl-[3px]">
          <Sel label="选定对象" value="选定对象" className="mt-1" />
          <span className="flex items-center gap-1.5 pt-px pl-0.5 leading-6 whitespace-nowrap"><Ico n="curveR" className="size-4" />关键点过滤器</span>
        </div>
        <div className="flex min-w-0 flex-1 flex-col pl-[13px]">
          <div className="flex h-[27px] items-center gap-[9px]">
            {["first", "prev", "playb", "next", "last", "zoom", "zoomall", "extents"].map((n) => <button key={n} type="button" aria-label={n} className="shrink-0"><Ico n={n} className="size-4" /></button>)}
          </div>
          <div className="flex h-5 items-start gap-[6px]">
            <Ico n="keymode" className="size-4" />
            <input aria-label="当前帧" defaultValue="0" className="h-5 w-[62px] border-t-2 border-l-2 border-black bg-[#4a4a4a] pl-1 text-xs" />
            <span className="w-3 text-[9px] leading-3">▲</span>
            <Ico n="fov" className="size-[18px]" /><Ico n="zregion" className="size-4" /><Ico n="hand" className="size-[18px]" />
          </div>
        </div>
      </div>
    </footer>
  );
}

const bar = "flex h-full shrink-0 items-center overflow-hidden border-r-2 border-b-2 border-[#1b1b1b] pt-0.5";
const headline = "pointer-events-none absolute isolate flex items-baseline font-['Noto_Sans_CJK_SC',sans-serif] font-black whitespace-nowrap [font-feature-settings:'halt']";

const Glyph = ({ t, className = "" }) => (
  <span data-t={t} className={`relative before:absolute before:top-0 before:left-0 before:-z-10 before:text-[#0a0a0c] before:content-[attr(data-t)] before:[-webkit-text-stroke:40px_#0a0a0c] ${className}`}>{t}</span>
);

export default function App() {
  return (
    <div className="relative flex h-screen w-full flex-col overflow-hidden bg-[#3c3c3c] font-['Open_Sans','Noto_Sans_CJK_SC',sans-serif]">
      <TitleBar />
      <nav className="flex h-5 shrink-0 items-center gap-[26px] bg-gradient-to-b from-[#979797] to-[#545454] pt-0.5 pl-7 text-xs leading-4 whitespace-nowrap text-[#f0f0f0]">
        {MENUS.map((m) => <button key={m} type="button">{m}</button>)}
        <button type="button" className="-ml-2">扮家家</button>
        <button type="button" className="-ml-3">溜云库</button>
      </nav>

      <div className="flex h-10 shrink-0 overflow-hidden">
        <div className={bar}>
          <span className="-ml-[19px] flex items-center"><Btn n="link" /><Btn n="unlink" /><Btn n="bind" /></span><Sep />
          <Sel label="选择过滤器" value="全部" className="mb-2 w-[67px]" />
          <Btn n="obj" on /><Btn n="byname" /><Btn n="rect" /><Btn n="window" /><Sep />
          <Btn n="move" /><Btn n="rotate" /><Btn n="scale" className="w-[34px]" />
          <Sel label="参考坐标系" value="视图" className="mb-2 w-[67px]" />
          <Btn n="pivot" /><Sep /><Btn n="manip" /><Btn n="key" on /><Sep />
          <Btn n="snap25" /><Btn n="angle" /><Btn n="percent" /><Btn n="spin" /><Sep /><Btn n="braces" />
          <Sel label="命名选择集" value="创建选择集" className="mb-2 w-[118px]" field="bg-[#5f5f5f] text-black border-2 border-[#aaa]" box="bg-white" /><Sep />
          <Btn n="mirror" /><Btn n="align" /><Sep /><Btn n="layers" className="w-[31px]" /><Sep />
          <Btn n="ribbon" ico="size-[26px]" /><Btn n="curve" ico="size-[26px]" /><Btn n="schematic" className="w-[31px]" ico="size-[26px]" /><Sep /><Btn n="material" className="w-[31px]" /><Sep />
          <Btn n="rsetup" className="w-[31px]" /><Btn n="rframe" className="w-[31px]" ico="size-[26px]" /><Btn n="render" className="w-[38px]" />
        </div>
        <div className="ml-1 flex flex-1 items-center border-b-2 border-l-4 border-double border-[#1b1b1b] pl-2"><Btn n="redgrid" /></div>
      </div>
      <div className="flex h-10 shrink-0">
        <div className={bar}><span className="-ml-[19px] flex"><Btn n="orange" /><Btn n="trees" /><Btn n="wrench" ico="size-[26px]" /><Btn n="list" ico="size-[26px]" /></span><span className="w-0.5" /></div>
      </div>
      <div className="flex h-10 shrink-0">
        <div className={bar}>
          <span className="-ml-[19px] flex items-center"><Btn n="magnet" /><Btn n="redmag" /><Btn n="dotmag" on /><Btn n="edgemag" on /><Btn n="midmag" on /><Btn n="trimag" /><Btn n="trifmag" /></span><Sep />
          <Btn n="starmag" /><Btn n="xymag" on /><span className="w-0.5" />
        </div>
        <div className={`${bar} ml-0.5 border-l-4 border-double pr-2 pl-0.5 text-xl text-[#ededed]`}>
          {["X", "Y", "Z"].map((a) => <Btn key={a} n={a}><span>{a}</span></Btn>)}
          <Btn n="XY" on><span className="text-sm">XY</span></Btn><Btn n="xymag" on />
        </div>
      </div>
      <div className="flex h-10 shrink-0">
        <div className={bar}><span className="-ml-[19px] flex"><Btn n="teal" /><Btn n="books" ico="size-6" /><Btn n="region" ico="size-6" /><Btn n="bust" ico="size-6" /><Btn n="mm" ico="size-6" /><Btn n="gear" ico="size-5" /></span><span className="w-0.5" /></div>
      </div>

      <div className="flex min-h-0 flex-1">
        <div className="flex min-w-0 flex-1 flex-col">
          <div className="flex min-h-0 flex-1">
            <div className="flex w-[13px] shrink-0 flex-col overflow-hidden border-r-2 border-[#161616]">
              {SLIVERS.map(([h, cs], g) => (
                <div key={g} className={`flex flex-col justify-around border-b-2 border-[#1a1a1a] ${h}`}>
                  {cs.map((c, i) => (
                    <svg key={i} viewBox="0 0 11 18" className="h-[18px] w-[11px]" aria-hidden="true"><ellipse cx="-2" cy="9" rx="5" ry="7" fill={c} /></svg>
                  ))}
                </div>
              ))}
            </div>
            <div className="flex w-[45px] shrink-0 flex-col items-center border-r-2 border-b-2 border-[#161616] text-xs text-[#ececec]">
              <svg viewBox="0 0 32 32" className="mt-[11px] size-8 shrink-0" aria-hidden="true"><circle cx="16" cy="16" r="16" fill="#868686" /><path d="M7 9q2-3 4 0h10q2-3 4 0v12q-1 6-9 6t-9-6z" fill="#fff" /><path d="M13 16v1M19 16v1M16 20v1" stroke="#777" strokeWidth="1.500" /></svg>
              <span className="mt-[11px] text-[11px] leading-4 text-[#6f9ae0]">RDF3</span>
              <div className="mt-[7px] flex h-[549px] flex-col">
                {SIDE.map((s, i) => <button key={i} type="button" className="flex-1">{s}</button>)}
              </div>
              <button type="button" aria-label="设置" className="mt-auto mb-2">
                <svg viewBox="0 0 28 28" className="size-7" fill="none" stroke="#858585" strokeWidth="2" aria-hidden="true"><circle cx="14" cy="14" r="12.500" /><path d="M14 8v12M9 11l10 6M19 11L9 17" strokeWidth="3" /><circle cx="14" cy="14" r="2" fill="#3c3c3c" stroke="none" /></svg>
              </button>
            </div>
            <main className="flex min-w-0 flex-1 flex-col">
              <div className="grid min-h-0 flex-1 grid-cols-2 grid-rows-2 gap-[3px] pl-px">
                <Viewport label="顶视图" name="顶" mode="线框" active>
                  <path d="M24 22v30M22 10l2 4 2-4M24 14v4" stroke="#238a2c" /><path d="M24 53h20M46 46l6 6M52 46l-6 6" stroke="#8a1c22" /><path d="M23 47h3l-3 4h3" stroke="#2727a8" />
                </Viewport>
                <Viewport label="前视图" name="前" mode="线框">
                  <path d="M24 22v30M22 10h4l-4 6h4" stroke="#2727a8" /><path d="M24 53h20M46 44l6 6M52 44l-6 6" stroke="#6a1c22" /><path d="M22 44l2 3 2-3M24 47v4" stroke="#238a2c" />
                </Viewport>
                <Viewport label="左视图" name="左" mode="线框">
                  <path d="M24 24v24M22 12h4l-4 6h4" stroke="#2727a8" /><path d="M24 49H2M2 40l2 4 2-4M4 44v5" stroke="#238a2c" />
                </Viewport>
                <Viewport label="透视图" name="透视" mode="明暗处理" className="bg-gradient-to-b from-[#0b0b0b] via-[#292929] via-55% to-[#474747]">
                  <path d="M24 24v26M22 12h4l-4 6h4" stroke="#2727a8" /><path d="M24 50l16-10M42 30l4 6M46 30l-4 6" stroke="#8a1c22" /><path d="M24 50L10 40M6 30l2 4 2-4" stroke="#238a2c" />
                </Viewport>
              </div>
              <div className="flex h-[18px] shrink-0 pl-px text-xs leading-4 text-[#cfcfcf]">
                <button type="button" className="w-[15px] border-r border-b border-black">&lt;</button>
                <button type="button" className="w-[125px] border-r-2 border-b-2 border-black text-center text-[11px]">0 / 100</button>
                <button type="button" className="w-4 border-r-2 border-b border-black">&gt;</button>
              </div>
              <Ruler />
            </main>
          </div>
          <div className="flex h-[39px] shrink-0">
            <div className={bar}>
              <span className="-ml-[19px] flex">
                {["bulbT", "sun", "camT", "treesT", "treelist", "halftree", "treebox", "ring", "stack", "quad", "play", "camplus", "panelT", "pot", "bulb"].map((n) => <Btn key={n} n={n} ico="size-[23px]" />)}
              </span>
              <span className="w-0.5" />
            </div>
          </div>
        </div>
        <ToolColumn />
        <CommandPanel />
        <div className="mt-[29px] mb-1 w-[139px] shrink-0 border-t-2 border-l-2 border-[#1d1d1d]" />
      </div>
      <StatusBar />

      <div className="absolute top-0 left-[833px] flex h-[19px] w-[201px] items-start justify-center gap-2.5 bg-white text-xs leading-[10px] text-[#222]">
        <span className="size-2 rounded-full bg-[#17b978]" /><span>上课中 00:02:49</span><Chevron className="mt-0.5 text-[#555]" />
      </div>

      <div className="absolute top-[34px] right-[32px] flex items-center gap-2.5">
        <svg viewBox="0 0 57 50" className="h-[50px] w-[57px]" aria-hidden="true"><path d="M14 26h30v12L29 50 14 38z" fill="#5561b8" /><path d="M29 0l28 20-28 21L0 20z" fill="#3a9dbd" /><path d="M22 13v15l14-8z" fill="#effafa" /></svg>
        <span className="text-4xl leading-[50px] text-[#cbcbcb]">腾讯课堂</span>
      </div>

      <ul role="menu" className="absolute top-[19px] left-[1240px] flex h-[386px] w-[260px] flex-col bg-white p-[3px] text-xs text-[#1c1c1c] shadow-[3px_3px_3px_rgba(0,0,0,0.5)]">
        {POPUP.map((p, i) => (
          <li key={p} role="none" className={`flex flex-1 items-center ${i === 16 ? "bg-[#91cdf8]" : ""}`}>
            <button type="button" role="menuitem" className="w-full pl-[31px] text-left leading-4">{p}</button>
          </li>
        ))}
      </ul>
      <svg viewBox="0 0 14 22" className="absolute top-[383px] left-[1314px] h-[21px] w-[13px]" aria-hidden="true"><path d="M1 1v16l4-4 3 8 3-1-3-8h5z" fill="#fff" stroke="#222" /></svg>

      <div className={`${headline} top-[280px] left-[287px] text-[175px] leading-[200px] text-white [-webkit-text-stroke:10px_white]`}>
        <Glyph t="三" /><Glyph t="连" className="ml-5" /><Glyph t="！" className="ml-[60px] text-[196px]" />
      </div>
      <div className={`${headline} top-[532px] left-[275px] text-[266px] leading-[300px] text-[#ffec3b] [-webkit-text-stroke:10px_#ffec3b]`}>
        <Glyph t="《" className="text-[272px]" /><Glyph t="3d" className="ml-[46px] text-[292px]" /><Glyph t="插" className="ml-8" /><Glyph t="件" className="ml-8" /><Glyph t="》" className="ml-[38px] text-[272px]" />
      </div>
    </div>
  );
}
